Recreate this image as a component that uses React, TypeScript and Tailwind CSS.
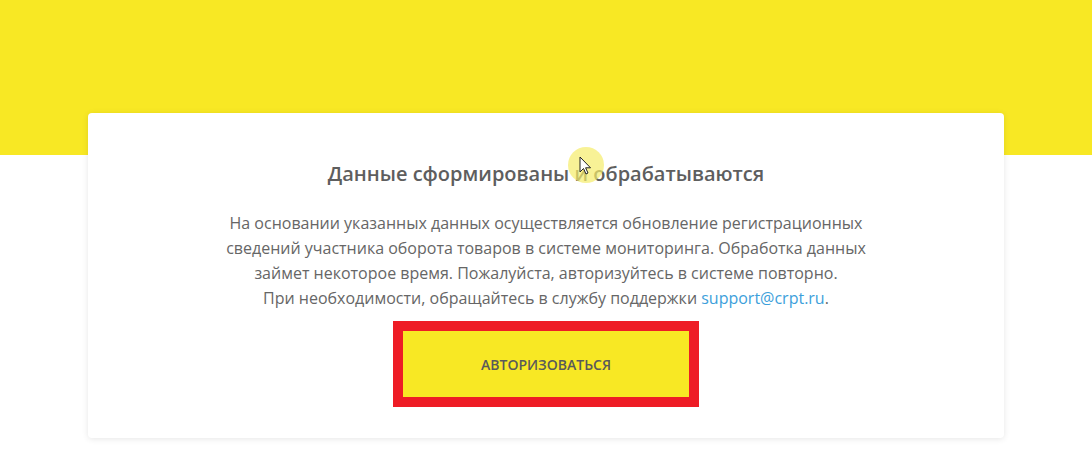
export default function App() {
    return (
        <div className="relative h-[464px] w-[1092px] overflow-hidden bg-white font-['Open_Sans',sans-serif]">
            <div className="h-[155px] bg-[#f8e824]" />
            <div className="-mt-[42px] px-[88px]">
                <div className="flex h-[325px] flex-col items-center rounded-[4px] bg-white pt-[49px] shadow-[0_1px_6px_rgba(0,0,0,0.1)]">
                    <h1 className="text-[20px] font-semibold leading-[24px] text-[#5e5e5e]">
                        Данные сформированы и обрабатываются
                    </h1>
                    <p className="mt-[25px] whitespace-nowrap text-center text-[16px] leading-[25px] text-[#666]">
                        На основании указанных данных осуществляется обновление регистрационных
                        <br />
                        сведений участника оборота товаров в системе мониторинга. Обработка данных
                        <br />
                        займет некоторое время. Пожалуйста, авторизуйтесь в системе повторно.
                        <br />
                        При необходимости, обращайтесь в службу поддержки{" "}
                        <a className="text-[#3d9fdb]">support@crpt.ru</a>.
                    </p>
                    <div className="mt-[10px] border-[10px] border-[#ee1c25]">
                        <button className="flex h-[66px] w-[286px] items-center justify-center bg-[#f8e824] text-[14px] font-semibold text-[#5a5a5a]">
                            АВТОРИЗОВАТЬСЯ
                        </button>
                    </div>
                </div>
            </div>
            <div className="absolute left-[568px] top-[147px] h-[36px] w-[36px] rounded-full bg-[#f5ec6a]/70" />
            <svg className="absolute left-[579px] top-[156px]" width="14" height="20" viewBox="0 0 14 20">
                <path d="M1 1 L1 16 L4.5 12.5 L7 18 L9 17 L6.6 11.8 L11.5 11.8 Z" fill="#fff" stroke="#222" strokeWidth="1" />
            </svg>
        </div>
    )
}
